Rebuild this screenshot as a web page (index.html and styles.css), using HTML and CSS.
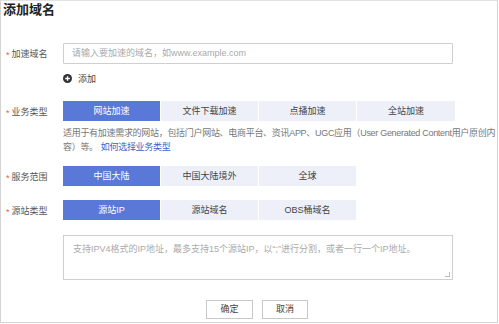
FILE: index.html
```html
<!DOCTYPE html>
<html lang="zh-CN">
<head>
    <meta charset="UTF-8">
    <meta name="viewport" content="width=device-width, initial-scale=1">
    <title>添加域名</title>
    <link rel="stylesheet" href="styles.css">
</head>
<body>
<div class="page">
    <h1 class="title">添加域名</h1>

    <!-- 加速域名 -->
    <div class="row row-domain">
        <div class="label"><span class="star">*</span>加速域名</div>
        <div class="field">
            <div class="input">请输入要加速的域名，如www.example.com</div>
        </div>
    </div>
    <div class="add-line">
        <svg class="add-icon" width="9" height="9" viewBox="0 0 10 10">
            <circle cx="5" cy="5" r="5" fill="#333"/>
            <path d="M5 2.4v5.2M2.4 5h5.2" stroke="#fff" stroke-width="1.5"/>
        </svg>
        <span>添加</span>
    </div>

    <!-- 业务类型 -->
    <div class="row row-type">
        <div class="label"><span class="star">*</span>业务类型</div>
        <div class="field">
            <div class="group">
                <span class="opt active">网站加速</span>
                <span class="opt">文件下载加速</span>
                <span class="opt">点播加速</span>
                <span class="opt">全站加速</span>
            </div>
        </div>
    </div>
    <div class="desc">
        适用于有加速需求的网站，包括门户网站、电商平台、资讯APP、UGC应用（User Generated Content用户原创内<br>
        容）等。<a href="#">如何选择业务类型</a>
    </div>

    <!-- 服务范围 -->
    <div class="row row-scope">
        <div class="label"><span class="star">*</span>服务范围</div>
        <div class="field">
            <div class="group">
                <span class="opt active">中国大陆</span>
                <span class="opt">中国大陆境外</span>
                <span class="opt">全球</span>
            </div>
        </div>
    </div>

    <!-- 源站类型 -->
    <div class="row row-origin">
        <div class="label"><span class="star">*</span>源站类型</div>
        <div class="field">
            <div class="group">
                <span class="opt active">源站IP</span>
                <span class="opt">源站域名</span>
                <span class="opt">OBS桶域名</span>
            </div>
        </div>
    </div>
    <div class="textarea">
        支持IPV4格式的IP地址，最多支持15个源站IP，以“;”进行分割，或者一行一个IP地址。
        <span class="grip"></span>
    </div>

    <div class="footer">
        <span class="btn btn-ok">确定</span>
        <span class="btn">取消</span>
    </div>
</div>
</body>
</html>
```

FILE: styles.css
```css
/* Genel */
* { box-sizing: border-box; margin: 0; padding: 0; }
body {
    font-family: "Liberation Sans", "Noto Sans CJK SC", sans-serif;
    font-size: 9px;
    color: #333;
    background: #fff;
    width: 499px;
    height: 324px;
    overflow: hidden;
}
.page {
    width: 498px;
    height: 323px;
    border: 1px solid #d4d4d4;
    border-top-color: #e2e2e2;
    overflow: hidden;
}
.title {
    font-size: 13px;
    font-weight: bold;
    line-height: 18px;
    color: #222;
    padding-left: 2px;
}

/* Satırlar */
.row {
    display: flex;
    align-items: center;
}
.label {
    width: 62px;
    padding-left: 5px;
    color: #555;
    white-space: nowrap;
}
.star {
    display: inline-block;
    color: #e2683f;
    margin-right: 2px;
    transform: translateY(1px);
}
.field { flex: 1; }

.row-domain { margin-top: 24px; }
.input {
    width: 390px;
    height: 21px;
    border: 1px solid #cfcfcf;
    border-radius: 1px;
    padding-left: 8px;
    line-height: 19px;
    color: #aaa;
}
.add-line {
    display: flex;
    align-items: center;
    margin: 7px 0 0 62px;
    height: 14px;
    color: #444;
}
.add-icon { margin-right: 6px; }

/* Buton grupları */
.group { display: flex; gap: 1px; }
.opt {
    width: 97px;
    height: 20px;
    line-height: 20px;
    text-align: center;
    background: #edf0f9;
    color: #444;
    white-space: nowrap;
}
.opt.active {
    background: #5a78d7;
    color: #fff;
}
.row-type { margin-top: 16px; }
.row-type .opt:last-child { width: 98px; }

.desc {
    margin: 5px 0 0 62px;
    line-height: 14px;
    color: #777;
    white-space: nowrap;
    letter-spacing: -0.3px;
}
.desc a {
    color: #3a62c9;
    text-decoration: none;
    margin-left: 3px;
}
.row-scope { margin-top: 12px; }
.row-origin { margin-top: 14px; }

.textarea {
    position: relative;
    width: 390px;
    height: 45px;
    margin: 15px 0 0 62px;
    border: 1px solid #cfcfcf;
    padding: 6px 0 0 9px;
    color: #aaa;
    line-height: 14px;
}
.grip {
    position: absolute;
    right: 2px;
    bottom: 2px;
    width: 5px;
    height: 5px;
    border-right: 1px solid #bbb;
    border-bottom: 1px solid #bbb;
}

/* Alt butonlar */
.footer {
    display: flex;
    gap: 9px;
    margin-top: 20px;
    padding-left: 205px;
}
.btn {
    width: 46px;
    height: 19px;
    line-height: 17px;
    border: 1px solid #c8c8c8;
    text-align: center;
    color: #444;
    background: #fff;
}
.btn-ok { width: 47px; }
```
